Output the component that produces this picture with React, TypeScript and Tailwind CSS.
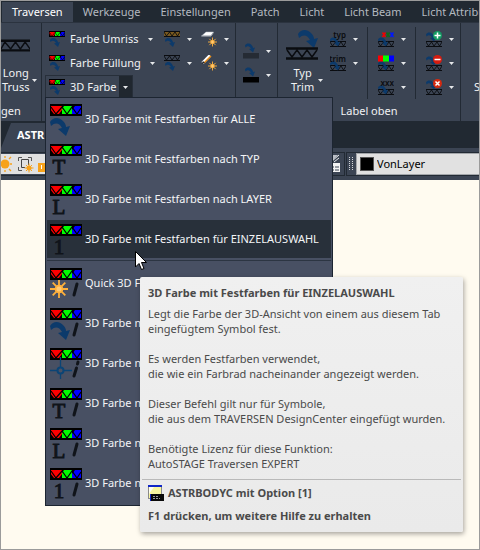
import React from "react";

const TABS = ["Traversen", "Werkzeuge", "Einstellungen", "Patch", "Licht", "Licht Beam", "Licht Attribute"];

type Mark = "arrow" | "T" | "L" | "1" | "star" | "target";

const MENU_TOP: { label: string; mark: Mark; active?: boolean }[] = [
  { label: "3D Farbe mit Festfarben für ALLE", mark: "arrow" },
  { label: "3D Farbe mit Festfarben nach TYP", mark: "T" },
  { label: "3D Farbe mit Festfarben nach LAYER", mark: "L" },
  { label: "3D Farbe mit Festfarben für EINZELAUSWAHL", mark: "1", active: true },
];

const MENU_BOTTOM: { label: string; mark: Mark }[] = [
  { label: "Quick 3D Farbe", mark: "star" },
  { label: "3D Farbe mit", mark: "arrow" },
  { label: "3D Farbe mit", mark: "target" },
  { label: "3D Farbe mit", mark: "T" },
  { label: "3D Farbe mit", mark: "L" },
  { label: "3D Farbe mit", mark: "1" },
];

/* ---------- icon parts, all drawn on a 32 x 32 grid ---------- */

function ColorTruss() {
  return (
    <g>
      <rect width="32" height="12" fill="#000" />
      <rect x="1" y="2" width="11" height="8" fill="#f00" />
      <rect x="12" y="2" width="10" height="8" fill="#0f0" />
      <rect x="22" y="2" width="9" height="8" fill="#00f" />
      <path d="M1 3 L6 10 L12 3 L17 10 L22 3 L27 10 L31 4" fill="none" stroke="#000" strokeWidth="1.2" />
      <path d="M0 5V10H4Z M9 10L12 6V10Z M12 2H14L12 5Z M22 2H25L22 6Z" fill="#000" />
    </g>
  );
}

function PlainTruss({ y, fill = "none" }: { y: number; fill?: string }) {
  return (
    <g transform={`translate(0 ${y})`}>
      <rect y="1" width="32" height="10" fill={fill} />
      <path d="M0 1H32 M0 11H32" stroke="#0a0c10" strokeWidth="2" />
      <path d="M0 2 L5 10 L11 2 L16 10 L22 2 L27 10 L32 2" fill="none" stroke="#0a0c10" strokeWidth="1.8" />
    </g>
  );
}

function Swoosh({ x = 0, y = 14 }: { x?: number; y?: number }) {
  return (
    <g transform={`translate(${x} ${y})`} fill="#0c3a6b">
      <path d="M0 4 C3 -1 9 -1 13 3 C15 5 16 7 16 9 L20 8 L16 18 L8 11 L12 10 C10 6 6 3 1 8 Z" />
    </g>
  );
}

function Star({ cx, cy, r }: { cx: number; cy: number; r: number }) {
  const d = r * 0.7;
  return (
    <g stroke="#ffb13b" strokeWidth="1.8">
      <path
        d={`M${cx - r} ${cy}H${cx + r} M${cx} ${cy - r}V${cy + r} M${cx - d} ${cy - d}L${cx + d} ${cy + d} M${cx - d} ${cy + d}L${cx + d} ${cy - d}`}
      />
      <circle cx={cx} cy={cy} r={r * 0.38} fill="#ffc974" />
    </g>
  );
}

function Icon({ size = 16, children }: { size?: 16 | 32; children: React.ReactNode }) {
  return (
    <svg viewBox="0 0 32 32" className={size === 16 ? "w-4 h-4 shrink-0" : "w-8 h-8 shrink-0"} aria-hidden="true">
      {children}
    </svg>
  );
}

function MenuIcon({ mark, single }: { mark: Mark; single?: boolean }) {
  return (
    <Icon size={32}>
      <ColorTruss />
      {mark === "arrow" && <Swoosh />}
      {mark === "star" && <Star cx={9} cy={21} r={9} />}
      {mark === "target" && (
        <g stroke="#0b4475" strokeWidth="1.3" fill="none">
          <path d="M0 22.500H7 M14 22.500H22 M10.500 9V19 M10.500 26V31" />
          <circle cx="10.500" cy="22.500" r="3" strokeWidth="2" />
        </g>
      )}
      {mark.length === 1 && (
        <text x="9" y="30" fontSize="21" textAnchor="middle" fill="#10141a" stroke="#10141a" strokeWidth="1" fontFamily="Liberation Serif, serif">
          {mark}
        </text>
      )}
      {single && (
        <path d={mark === "target" ? "M26.500 20L24 28 M28 14L27.500 16" : "M27 16L24 27"} stroke="#10141a" strokeWidth="3" strokeLinecap="round" />
      )}
    </Icon>
  );
}

function Caret() {
  return (
    <svg viewBox="0 0 5 3" className="w-[5px] h-[3px] shrink-0" aria-hidden="true">
      <path d="M0 0H5L2.500 3Z" fill="#e6e8ea" />
    </svg>
  );
}

function IconButton({ label, children }: { label: string; children: React.ReactNode }) {
  return (
    <button type="button" aria-label={label} className="flex h-6 items-center gap-[7px]">
      <Icon>{children}</Icon>
      <Caret />
    </button>
  );
}

function Badge({ fill, d }: { fill: string; d: string }) {
  return (
    <g>
      <PlainTruss y={20} />
      <Swoosh x={0} y={3} />
      <circle cx="23" cy="9" r="9" fill={fill} />
      <path d={d} stroke="#fff" strokeWidth="3" />
    </g>
  );
}

function TextMark({ text, color = "#0a0c10" }: { text: string; color?: string }) {
  return (
    <text x="32" y="13" fontSize="16" fontWeight="600" textAnchor="end" fill={color} fontFamily="Noto Sans, sans-serif">
      {text}
    </text>
  );
}

function Ribbon() {
  return (
    <div className="flex h-[99px] shrink-0 border-t border-[#2b333f] bg-[#3b4453] text-[#f1f2f4]">
      <section className="flex w-[41px] shrink-0 flex-col justify-between overflow-hidden border-r border-[#222a34]">
        <button type="button" className="flex flex-col pt-4 leading-[14px]">
          <svg viewBox="0 0 30 13" className="mb-[14px] h-[13px] w-[29px]" aria-hidden="true">
            <path d="M0 1.500H30 M0 11.500H30" stroke="#0a0c10" strokeWidth="2.500" />
            <path d="M0 10L4 3L10 10L15 3L20 10L25 3L30 10" fill="none" stroke="#0a0c10" strokeWidth="1.500" />
          </svg>
          <span className="flex items-center gap-[3px] pl-[1px]">
            <span className="text-center">
              Long
              <br />
              Truss
            </span>
            <Caret />
          </span>
        </button>
        <span className="pb-[1px] leading-[18px]">gen</span>
      </section>

      <section className="flex w-[194px] shrink-0 items-start border-r border-[#222a34] pl-[7px] pt-1">
        <div className="flex w-[115px] flex-col">
          <button type="button" className="flex h-6 items-center gap-[5px] whitespace-nowrap">
            <Icon><ColorTruss /><Swoosh x={2} /></Icon>
            Farbe Umriss
            <span className="pl-1"><Caret /></span>
          </button>
          <button type="button" className="flex h-6 items-center gap-[5px] whitespace-nowrap">
            <Icon><ColorTruss /><Swoosh x={2} /></Icon>
            Farbe Füllung
            <span className="pl-1"><Caret /></span>
          </button>
          <div className="-ml-1 flex h-6 w-[88px] border border-[#272f3a]">
            <button type="button" className="flex flex-1 items-center gap-[5px] whitespace-nowrap pl-[3px]">
              <Icon><ColorTruss /><Swoosh x={2} /></Icon>
              3D Farbe
            </button>
            <button type="button" aria-label="3D Farbe Auswahl" className="flex w-[13px] items-center justify-center bg-[#20272f]">
              <Caret />
            </button>
          </div>
        </div>
        <div className="flex flex-col">
          <IconButton label="Umriss"><PlainTruss y={0} fill="#7a5a20" /><Swoosh x={2} /></IconButton>
          <IconButton label="Füllung"><PlainTruss y={0} /><Swoosh x={2} /></IconButton>
        </div>
        <div className="ml-[9px] flex flex-col">
          <IconButton label="Radierer">
            <path d="M10 2H25L20 10H1Z" fill="#fff" stroke="#b5bac2" />
            <path d="M1 10H20L25 3" fill="none" stroke="#9aa0a8" strokeWidth="2" />
            <Star cx={23} cy={22} r={9} />
          </IconButton>
          <IconButton label="Pinsel">
            <path d="M18 1L3 16" stroke="#fff" strokeWidth="6" />
            <path d="M20 2L6 16" stroke="#e88a12" strokeWidth="3" />
            <path d="M4 12L8 16L1 18Z" fill="#20242a" />
            <Star cx={23} cy={22} r={9} />
          </IconButton>
        </div>
      </section>

      <section className="flex w-[42px] shrink-0 flex-col border-r border-[#222a34] pl-[7px] pt-4">
        <IconButton label="Fläche"><Swoosh x={4} y={1} /><rect y="20" width="32" height="11" fill="#252b34" /></IconButton>
        <IconButton label="Fläche schwarz"><Swoosh x={4} y={1} /><rect y="20" width="32" height="11" fill="#000" /></IconButton>
      </section>

      <section className="flex w-[183px] shrink-0 flex-col justify-between border-r border-[#222a34] pt-1">
        <div className="flex">
          <button type="button" className="ml-2 flex w-11 flex-col pt-[3px] leading-[14px]">
            <svg viewBox="0 0 32 30" className="mb-[6px] h-[30px] w-8" aria-hidden="true">
              <Swoosh x={12} y={0} />
              <path d="M0 18.500H32 M0 28.500H32" stroke="#0a0c10" strokeWidth="2.500" />
              <path d="M1 20L6 27L11 20L16 27L21 20L26 27L31 20" fill="none" stroke="#0a0c10" strokeWidth="1.500" />
            </svg>
            <span className="flex items-center gap-1 pl-[5px]">
              <span className="text-center">
                Typ
                <br />
                Trim
              </span>
              <Caret />
            </span>
          </button>
          <div className="flex w-[37px] flex-col">
            <IconButton label="Typ"><PlainTruss y={20} /><Swoosh y={13} /><TextMark text="typ" /></IconButton>
            <IconButton label="Trim"><PlainTruss y={20} /><Swoosh y={13} /><TextMark text="trim" /></IconButton>
          </div>
          <div className="flex w-12 flex-col border-l border-[#222a34] pl-[10px]">
            <IconButton label="Label Farben">
              <PlainTruss y={20} />
              <Swoosh y={13} />
              <g strokeWidth="3">
                <path d="M9 3L15 12 M15 3L9 12" stroke="#f00000" />
                <path d="M17 3L23 12 M23 3L17 12" stroke="#106a18" />
                <path d="M25 3L31 12 M31 3L25 12" stroke="#0018ff" />
              </g>
            </IconButton>
            <IconButton label="Label RGB">
              <PlainTruss y={20} />
              <Swoosh y={13} />
              <rect width="10" height="12" y="1" fill="#f00" />
              <rect x="10" width="12" height="12" y="1" fill="#0f0" />
              <rect x="22" width="10" height="12" y="1" fill="#00f" />
            </IconButton>
            <IconButton label="Label Text"><PlainTruss y={20} /><Swoosh y={13} /><TextMark text="xxx" /></IconButton>
          </div>
          <div className="flex w-[45px] flex-col border-l border-[#222a34] pl-[10px]">
            <IconButton label="Label hinzufügen"><Badge fill="#129a62" d="M17 9H29 M23 3V15" /></IconButton>
            <IconButton label="Label entfernen"><Badge fill="#d41c10" d="M17 9H29" /></IconButton>
            <IconButton label="Label löschen"><Badge fill="#d42a10" d="M19 5L27 13 M27 5L19 13" /></IconButton>
          </div>
        </div>
        <span className="pb-[1px] text-center leading-[18px]">Label oben</span>
      </section>

      <section className="shrink-0 pl-[13px] pt-[57px] leading-[14px]">S</section>
    </div>
  );
}

function Toolbars() {
  return (
    <div className="flex h-8 shrink-0 bg-[#3b4453] pt-1">
      <div className="flex h-6 w-[344px] shrink-0 items-center justify-between border-y border-r border-[#222a34] pr-[2px]">
        <div className="flex h-5 flex-1 items-center bg-[#e1e1e1]">
          <svg viewBox="0 0 44 20" className="h-5 w-11" aria-hidden="true">
            <circle cx="4" cy="10" r="4.500" fill="#f7a21b" />
            <path d="M4 2V4 M4 16V18 M9 10H11 M8 5L10 3 M8 15L10 17" stroke="#f7a21b" strokeWidth="1.300" />
            <path d="M17.500 7V3.500H21 M27 3.500H30.500V7 M17.500 13V16.500H21" fill="none" stroke="#555" />
            <path d="M20.500 5.500H27.500V11 M20.500 5.500V13.500H24" fill="none" stroke="#444" />
            <circle cx="28" cy="14" r="2.500" fill="#f7a21b" />
            <path d="M28 9.500V18.500 M23.500 14H32.500 M25 11L31 17 M25 17L31 11" stroke="#f7a21b" strokeWidth="1" />
            <rect x="37" y="9" width="7" height="9" fill="#f7a21b" />
            <rect x="40" y="11" width="1" height="4" fill="#fff" />
          </svg>
        </div>
        <svg viewBox="0 0 13 20" className="h-5 w-[13px]" aria-hidden="true">
          <path d="M1 9L9 1H1Z" fill="#b8bcc4" />
          <path d="M2 8L10 1 M5 8L10 4" stroke="#e6e8ea" />
          <rect x="1" y="9" width="10" height="9" fill="#f3f3f3" />
          <path d="M3 13H5 M6 13H10 M3 16H5 M6 16H10" stroke="#3b4453" />
        </svg>
      </div>
      <div className="ml-[1px] flex h-6 flex-1 items-center border-y border-l border-[#222a34] pl-[2px]">
        <svg viewBox="0 0 4 14" className="mr-[3px] h-[14px] w-1" aria-hidden="true">
          <path d="M0.500 0V14 M3.500 0V14" stroke="#d5d8dc" strokeDasharray="1 1" />
        </svg>
        <label className="flex h-[22px] flex-1 items-center border border-r-0 border-[#a3a6aa] bg-[#e1e1e1] pl-[3px] text-black">
          <span className="mr-[3px] size-[14px] border border-[#555] bg-black" />
          <select aria-label="Farbe" className="flex-1 appearance-none bg-transparent">
            <option>VonLayer</option>
          </select>
        </label>
      </div>
    </div>
  );
}

function FlyoutMenu() {
  return (
    <div role="menu" className="absolute left-[44px] top-[96px] w-[288px] border border-[#1c2531] bg-[#485063] px-[1px] pb-[1px] pt-[2px] text-[#f4f5f7]">
      {MENU_TOP.map((item) => (
        <button
          key={item.label}
          type="button"
          role="menuitem"
          className={`mb-[2px] flex h-[38px] w-full items-center gap-[3px] whitespace-nowrap pl-[3px] pt-[2px] ${item.active ? "bg-[#28303a]" : ""}`}
        >
          <MenuIcon mark={item.mark} />
          <span className="pb-[2px]">{item.label}</span>
        </button>
      ))}
      <hr className="mb-[3px] mt-[1px] border-[#2c3542]" />
      {MENU_BOTTOM.map((item) => (
        <button
          key={item.mark}
          type="button"
          role="menuitem"
          className="mb-[2px] flex h-[38px] w-full items-center gap-[3px] whitespace-nowrap pl-[3px] pt-[2px]"
        >
          <MenuIcon mark={item.mark} single />
          <span className="pb-[2px]">{item.label}</span>
        </button>
      ))}
    </div>
  );
}

function Tooltip() {
  return (
    <div
      role="tooltip"
      className="absolute left-[139px] top-[276px] w-[323px] rounded-[2px] bg-gradient-to-b from-[#f0f0f0] to-[#eaeaea] px-2 py-2 text-[#4a4a4a] shadow-[1px_2px_5px_rgba(0,0,0,0.35)]"
    >
      <h2 className="whitespace-nowrap font-bold leading-4">3D Farbe mit Festfarben für EINZELAUSWAHL</h2>
      <div className="mt-[5px] flex flex-col gap-[15px] whitespace-nowrap leading-[15px]">
        <p>
          Legt die Farbe der 3D-Ansicht von einem aus diesem Tab
          <br />
          eingefügtem Symbol fest.
        </p>
        <p>
          Es werden Festfarben verwendet,
          <br />
          die wie ein Farbrad nacheinander angezeigt werden.
        </p>
        <p>
          Dieser Befehl gilt nur für Symbole,
          <br />
          die aus dem TRAVERSEN DesignCenter eingefügt wurden.
        </p>
        <p>
          Benötigte Lizenz für diese Funktion:
          <br />
          AutoSTAGE Traversen EXPERT
        </p>
      </div>
      <hr className="-mx-[6px] mb-[5px] mt-2 border-[#b9b9b9]" />
      <div className="flex items-center gap-1 font-bold leading-4">
        <svg viewBox="0 0 16 16" className="h-4 w-4" aria-hidden="true">
          <rect x="0.500" y="0.500" width="13" height="13" fill="#f8f6a0" stroke="#8a8a8a" />
          <path d="M1 2H6L1 9Z" fill="#fffef0" />
          <rect width="14" height="2" fill="#1026c8" />
          <rect x="2" y="9" width="14" height="7" fill="#0a0a0a" />
          <path d="M2.500 9V16" stroke="#1026c8" />
          <path d="M5 11.500H10 M5 13.500H12" stroke="#9a9a9a" strokeDasharray="2 1" />
        </svg>
        ASTRBODYC mit Option [1]
      </div>
      <p className="mt-[7px] font-bold leading-4">F1 drücken, um weitere Hilfe zu erhalten</p>
    </div>
  );
}

export default function App() {
  return (
    <div className="relative flex min-h-screen flex-col overflow-hidden border border-[#9b9b9b] bg-[#fffbf0] font-['Noto_Sans','Open_Sans',sans-serif] text-[11px]">
      <nav className="flex h-[21px] shrink-0 bg-[#212932] pl-[1px] pt-[1px] text-[#b4b9c0]">
        {TABS.map((tab, i) => (
          <a
            key={tab}
            href="#"
            className={`flex shrink-0 items-center whitespace-nowrap px-[10px] ${i === 0 ? "bg-[#3b4453] text-white" : ""}`}
          >
            {tab}
          </a>
        ))}
      </nav>

      <Ribbon />

      {/* Drawing file tabs */}
      <div className="flex h-[27px] shrink-0 items-end bg-[#212932]">
        <div className="flex h-[25px] w-[200px] items-center bg-[#3b4453] pl-4 font-bold text-white [clip-path:polygon(10px_0,100%_0,100%_100%,0_100%)]">
          ASTR
        </div>
      </div>

      <Toolbars />

      <main className="flex-1" />

      <FlyoutMenu />
      <svg viewBox="0 0 12 20" className="absolute left-[134px] top-[250px] h-5 w-3" aria-hidden="true">
        <path d="M0.500 0.500V16L4 12.500L6.500 18.500L9 17.500L6.500 11.500H11.500Z" fill="#fff" stroke="#000" />
      </svg>
      <Tooltip />
    </div>
  );
}
